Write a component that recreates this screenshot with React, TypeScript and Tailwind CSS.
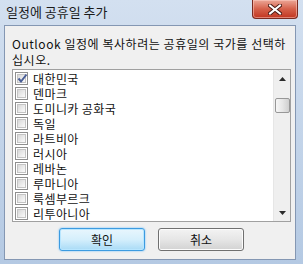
import { useState } from "react";

const countries = [
  "대한민국",
  "덴마크",
  "도미니카 공화국",
  "독일",
  "라트비아",
  "러시아",
  "레바논",
  "루마니아",
  "룩셈부르크",
  "리투아니아",
];

const CheckBox = ({ checked }: { checked: boolean }) => (
  <span className="flex h-[13px] w-[13px] shrink-0 items-center justify-center border border-[#8f8f8f] bg-white">
    <span className="relative flex h-[9px] w-[9px] items-center justify-center border border-[#c4c4c4] bg-linear-to-br from-[#d8d8d8] to-[#fbfbfb]">
      {checked && (
        <svg width="11" height="11" viewBox="0 0 11 11" className="absolute -top-[2px] -left-[1px]">
          <path d="M1.5 5.5 L4 8.5 L9.5 1.5" fill="none" stroke="#4a5f97" strokeWidth="2" />
        </svg>
      )}
    </span>
  </span>
);

const Arrow = ({ up }: { up: boolean }) => (
  <svg width="7" height="4" viewBox="0 0 7 4">
    <path d={up ? "M0 4 L3.5 0 L7 4 Z" : "M0 0 L3.5 4 L7 0 Z"} fill="#2b2b2b" />
  </svg>
);

export default function App() {
  const [checked, setChecked] = useState<string[]>(["대한민국"]);

  const toggle = (name: string) =>
    setChecked((prev) =>
      prev.includes(name) ? prev.filter((n) => n !== name) : [...prev, name]
    );

  return (
    <div
      className="flex h-[264px] w-[303px] flex-col overflow-hidden bg-linear-to-b from-[#d3e0f0] to-[#b4c9e3] text-[#111]"
      style={{ fontFamily: '"Noto Sans CJK KR", "Noto Sans", sans-serif' }}
    >
      {/* title bar */}
      <div className="flex h-[25px] shrink-0 items-start justify-between pl-[6px] pr-[5px]">
        <span className="mt-[3px] text-[13px] leading-[18px] text-[#1a1a1a]">일정에 공휴일 추가</span>
        <button
          type="button"
          className="flex h-[19px] w-[46px] items-center justify-center rounded-b-[4px] border border-t-0 border-[#7a2a20] bg-linear-to-b from-[#eba697] via-[#d5604a] to-[#c1341f] shadow-[inset_0_0_0_1px_rgba(255,210,200,0.5)]"
        >
          <svg width="14" height="11" viewBox="0 0 14 11">
            <path d="M2 1.5 L12 9.5 M12 1.5 L2 9.5" stroke="#4a1a14" strokeWidth="4" strokeLinecap="square" />
            <path d="M2 1.5 L12 9.5 M12 1.5 L2 9.5" stroke="#ffffff" strokeWidth="2" strokeLinecap="square" />
          </svg>
        </button>
      </div>

      {/* client area */}
      <div className="ml-[4px] mr-[7px] mb-[4px] flex flex-1 flex-col border border-[#8497b3] bg-[#f0f0f0] pl-[7px] pt-[10px]">
        <p className="whitespace-nowrap text-[12px] leading-[16px] tracking-[0.55px]">
          Outlook 일정에 복사하려는 공휴일의 국가를 선택하
          <br />
          십시오.
        </p>

        <div className="mt-[1px] flex h-[153px] w-[279px] border border-[#a0a0a0] bg-white">
          <ul className="flex flex-1 flex-col pt-[1px] pl-[2px]">
            {countries.map((name) => (
              <li
                key={name}
                onClick={() => toggle(name)}
                className="flex h-[15px] items-center gap-[5px] overflow-hidden text-[12px] leading-[15px] tracking-[0.4px]"
              >
                <CheckBox checked={checked.includes(name)} />
                <span className="whitespace-nowrap">{name}</span>
              </li>
            ))}
          </ul>
          <div className="flex w-[17px] flex-col items-center border-l border-[#e6e6e6] bg-[#efefef]">
            <div className="flex h-[17px] w-full items-center justify-center">
              <Arrow up />
            </div>
            <div className="mt-[11px] h-[15px] w-[15px] rounded-[2px] border border-[#979797] bg-linear-to-r from-[#f6f6f6] via-[#e6e6e6] to-[#cfcfcf]" />
            <div className="flex-1" />
            <div className="flex h-[17px] w-full items-center justify-center">
              <Arrow up={false} />
            </div>
          </div>
        </div>

        <div className="mt-[6px] flex gap-[13px] pl-[47px]">
          <button
            type="button"
            className="flex h-[23px] w-[86px] items-center justify-center rounded-[3px] border border-[#3c9be0] bg-linear-to-b from-[#e8f6fd] via-[#d5effc] to-[#a9dbf6] text-[12px] shadow-[inset_0_0_0_1px_#b8e6ff,0_0_2px_#5cb8ff]"
          >
            확인
          </button>
          <button
            type="button"
            className="flex h-[23px] w-[86px] items-center justify-center rounded-[3px] border border-[#707070] bg-linear-to-b from-[#f3f3f3] via-[#e6e6e6] to-[#d2d2d2] text-[12px] shadow-[inset_0_0_0_1px_#fcfcfc]"
          >
            취소
          </button>
        </div>
      </div>
    </div>
  );
}
